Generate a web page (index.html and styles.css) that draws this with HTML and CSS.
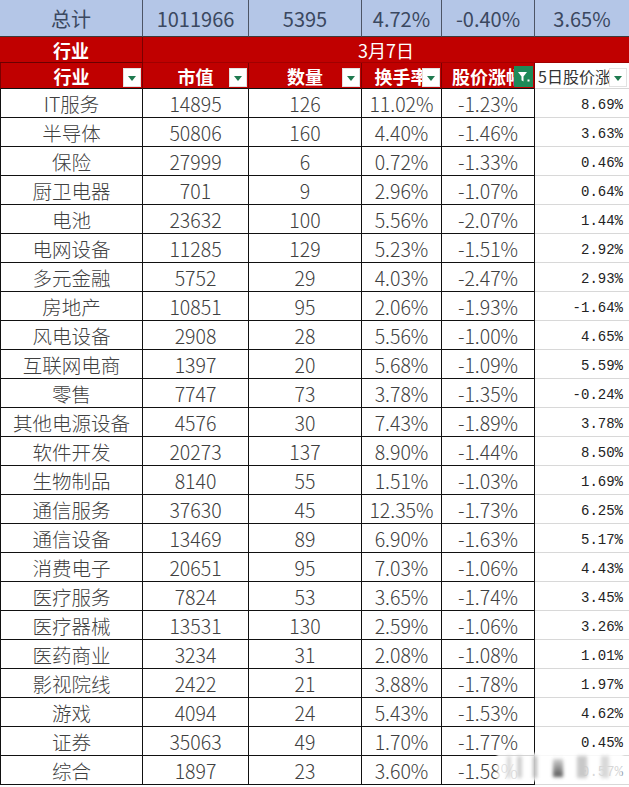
FILE: index.html
```html
<!DOCTYPE html>
<html lang="zh">
<head>
<meta charset="utf-8">
<title>行业统计</title>
<link rel="stylesheet" href="styles.css">
</head>
<body>
<div class="sheet">
  <div class="row total">
    <div class="c">总计</div><div class="c">1011966</div><div class="c">5395</div><div class="c">4.72%</div><div class="c">-0.40%</div><div class="c">3.65%</div>
  </div>
  <div class="row head1">
    <div class="c first">行业</div><div class="c date">3月7日</div>
  </div>
  <div class="row head2">
    <div class="c"><span class="lbl">行业</span><span class="fb"><i class="tri"></i></span></div>
    <div class="c"><span class="lbl">市值</span><span class="fb"><i class="tri"></i></span></div>
    <div class="c"><span class="lbl">数量</span><span class="fb"><i class="tri"></i></span></div>
    <div class="c"><span class="lbl">换手率</span><span class="fb"><i class="tri"></i></span></div>
    <div class="c"><span class="lbl">股价涨幅</span><span class="fb on"><svg width="14" height="14" viewBox="0 0 14 14"><path d="M1 2h9l-3.5 4.5v5l-2-1.2v-3.8z" fill="#fff"/><rect x="10.5" y="9.5" width="2" height="2" fill="#fff"/></svg></span></div>
    <div class="c last"><span class="lbl">5日股价涨幅</span><span class="fb"><i class="tri"></i></span></div>
  </div>
  <div class="row"><div class="c">IT服务</div><div class="c">14895</div><div class="c">126</div><div class="c">11.02%</div><div class="c">-1.23%</div><div class="c m">8.69%</div></div>
  <div class="row"><div class="c">半导体</div><div class="c">50806</div><div class="c">160</div><div class="c">4.40%</div><div class="c">-1.46%</div><div class="c m">3.63%</div></div>
  <div class="row"><div class="c">保险</div><div class="c">27999</div><div class="c">6</div><div class="c">0.72%</div><div class="c">-1.33%</div><div class="c m">0.46%</div></div>
  <div class="row"><div class="c">厨卫电器</div><div class="c">701</div><div class="c">9</div><div class="c">2.96%</div><div class="c">-1.07%</div><div class="c m">0.64%</div></div>
  <div class="row"><div class="c">电池</div><div class="c">23632</div><div class="c">100</div><div class="c">5.56%</div><div class="c">-2.07%</div><div class="c m">1.44%</div></div>
  <div class="row"><div class="c">电网设备</div><div class="c">11285</div><div class="c">129</div><div class="c">5.23%</div><div class="c">-1.51%</div><div class="c m">2.92%</div></div>
  <div class="row"><div class="c">多元金融</div><div class="c">5752</div><div class="c">29</div><div class="c">4.03%</div><div class="c">-2.47%</div><div class="c m">2.93%</div></div>
  <div class="row"><div class="c">房地产</div><div class="c">10851</div><div class="c">95</div><div class="c">2.06%</div><div class="c">-1.93%</div><div class="c m">-1.64%</div></div>
  <div class="row"><div class="c">风电设备</div><div class="c">2908</div><div class="c">28</div><div class="c">5.56%</div><div class="c">-1.00%</div><div class="c m">4.65%</div></div>
  <div class="row"><div class="c">互联网电商</div><div class="c">1397</div><div class="c">20</div><div class="c">5.68%</div><div class="c">-1.09%</div><div class="c m">5.59%</div></div>
  <div class="row"><div class="c">零售</div><div class="c">7747</div><div class="c">73</div><div class="c">3.78%</div><div class="c">-1.35%</div><div class="c m">-0.24%</div></div>
  <div class="row"><div class="c">其他电源设备</div><div class="c">4576</div><div class="c">30</div><div class="c">7.43%</div><div class="c">-1.89%</div><div class="c m">3.78%</div></div>
  <div class="row"><div class="c">软件开发</div><div class="c">20273</div><div class="c">137</div><div class="c">8.90%</div><div class="c">-1.44%</div><div class="c m">8.50%</div></div>
  <div class="row"><div class="c">生物制品</div><div class="c">8140</div><div class="c">55</div><div class="c">1.51%</div><div class="c">-1.03%</div><div class="c m">1.69%</div></div>
  <div class="row"><div class="c">通信服务</div><div class="c">37630</div><div class="c">45</div><div class="c">12.35%</div><div class="c">-1.73%</div><div class="c m">6.25%</div></div>
  <div class="row"><div class="c">通信设备</div><div class="c">13469</div><div class="c">89</div><div class="c">6.90%</div><div class="c">-1.63%</div><div class="c m">5.17%</div></div>
  <div class="row"><div class="c">消费电子</div><div class="c">20651</div><div class="c">95</div><div class="c">7.03%</div><div class="c">-1.06%</div><div class="c m">4.43%</div></div>
  <div class="row"><div class="c">医疗服务</div><div class="c">7824</div><div class="c">53</div><div class="c">3.65%</div><div class="c">-1.74%</div><div class="c m">3.45%</div></div>
  <div class="row"><div class="c">医疗器械</div><div class="c">13531</div><div class="c">130</div><div class="c">2.59%</div><div class="c">-1.06%</div><div class="c m">3.26%</div></div>
  <div class="row"><div class="c">医药商业</div><div class="c">3234</div><div class="c">31</div><div class="c">2.08%</div><div class="c">-1.08%</div><div class="c m">1.01%</div></div>
  <div class="row"><div class="c">影视院线</div><div class="c">2422</div><div class="c">21</div><div class="c">3.88%</div><div class="c">-1.78%</div><div class="c m">1.97%</div></div>
  <div class="row"><div class="c">游戏</div><div class="c">4094</div><div class="c">24</div><div class="c">5.43%</div><div class="c">-1.53%</div><div class="c m">4.62%</div></div>
  <div class="row"><div class="c">证券</div><div class="c">35063</div><div class="c">49</div><div class="c">1.70%</div><div class="c">-1.77%</div><div class="c m">0.45%</div></div>
  <div class="row"><div class="c">综合</div><div class="c">1897</div><div class="c">23</div><div class="c">3.60%</div><div class="c">-1.58%</div><div class="c m">0.57%</div></div>
  <div class="wm">
    <span class="b b1"></span><span class="b b2"></span><span class="b b3"></span><span class="b b4"></span><span class="b b5"></span><span class="b b6"></span>
  </div>
</div>
</body>
</html>
```
FILE: styles.css
```css
html, body {
  margin: 0;
  padding: 0;
  background: #fff;
}
.sheet {
  position: relative;
  width: 629px;
  font-family: "Noto Sans CJK SC", "Noto Sans", sans-serif;
}
.row {
  display: grid;
  grid-template-columns: 143px 106px 113px 80px 93px 94px;
  height: 29px;
}
.row .c {
  box-sizing: border-box;
  height: 29px;
  border-right: 1px solid #111;
  border-bottom: 1px solid #111;
  display: flex;
  align-items: center;
  justify-content: center;
  font-size: 19.5px;
  font-weight: 300;
  color: #404040;
  white-space: nowrap;
  overflow: hidden;
  line-height: 1.2;
  padding-top: 1px;
}
.row .c:first-child {
  border-left: 1px solid #111;
}
.row .c.m {
  border-right: none;
  border-bottom: 1px solid #d8d8d8;
  justify-content: flex-end;
  padding-right: 6px;
  padding-top: 5px;
  font-family: "Liberation Mono", "DejaVu Sans Mono", monospace;
  font-size: 14px;
  font-weight: 400;
  color: #222;
}

/* total row */
.row.total {
  height: 37px;
  background: #b4c6e7;
}
.row.total .c {
  height: 37px;
  border-left: none;
  border-right: 1px solid #4d5566;
  border-bottom: 1px solid #3c3c3c;
  color: #3b4860;
  font-weight: 400;
  font-size: 20px;
}
.row.total .c:last-child {
  border-right: none;
}

/* header rows */
.row.head1 {
  height: 26px;
  grid-template-columns: 143px 486px;
  background: #c00000;
}
.row.head1 .c {
  height: 26px;
  border: none;
  border-bottom: 1px solid #a00000;
  color: #fff;
  font-weight: 700;
  font-size: 18px;
  padding-top: 2px;
}
.row.head1 .c.first {
  border-right: 1px solid #7a0000;
  border-bottom: 1px solid #6a0000;
}
.row.head1 .c.date {
  font-weight: 400;
  padding-top: 2px;
}
.row.head2 {
  height: 26px;
  background: #c00000;
}
.row.head2 .c {
  position: relative;
  height: 26px;
  border-left: none;
  border-right: 1px solid #7a0000;
  border-bottom: 1px solid #111;
  color: #fff;
  font-weight: 700;
  font-size: 18px;
  padding-top: 2px;
}
.row.head2 .c:first-child {
  border-left: 1px solid #7a0000;
}
.row.head2 .c.last {
  background: #fff;
  border-right: none;
  border-bottom: 1px solid #d8d8d8;
  justify-content: flex-start;
  padding-left: 3px;
  color: #333;
  font-weight: 400;
  font-size: 16px;
}
.lbl {
  display: block;
}
.fb {
  position: absolute;
  right: 1px;
  bottom: 1px;
  width: 18px;
  height: 19px;
  box-sizing: border-box;
  background: #fff;
  border: 1px solid #e2e2e2;
  display: flex;
  align-items: center;
  justify-content: center;
}
.fb .tri {
  display: block;
  width: 0;
  height: 0;
  border-left: 4px solid transparent;
  border-right: 4px solid transparent;
  border-top: 5px solid #1f7a4f;
  margin-top: 2px;
}
.fb.on {
  background: #1e8a58;
  border-color: #1e8a58;
  width: 19px;
  height: 21px;
}
.row.head2 .c.last .fb {
  right: 2px;
}

/* blurred watermark */
.wm {
  position: absolute;
  left: 497px;
  top: 753px;
  width: 126px;
  height: 28px;
  background: rgba(255, 255, 255, 0.82);
  filter: blur(1px);
}
.wm .b {
  position: absolute;
  top: 3px;
  height: 22px;
  filter: blur(1.5px);
}
.wm .b1 { left: 10px; width: 4px; background: #d6d6d6; }
.wm .b2 { left: 20px; width: 5px; background: #cfcfcf; }
.wm .b3 { left: 36px; width: 4px; background: #b8b8b8; }
.wm .b4 { left: 56px; width: 10px; top: 6px; height: 18px; background: linear-gradient(#d0d0d0, #555); }
.wm .b5 { left: 80px; width: 10px; background: #c8c8c8; }
.wm .b6 { left: 104px; width: 8px; background: #d8d8d8; }
```
